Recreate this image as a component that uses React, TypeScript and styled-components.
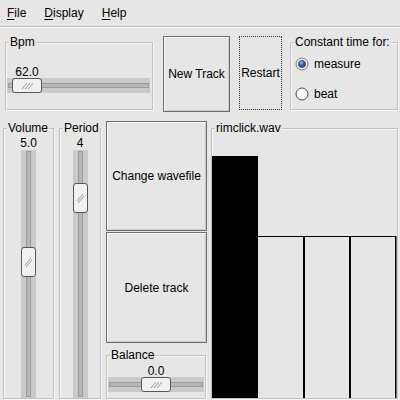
import React from "react";
import styled, { createGlobalStyle } from "styled-components";

const BG = "#e6e6e6";

const Global = createGlobalStyle`
  * { box-sizing: border-box; }
  html, body { margin: 0; padding: 0; background: ${BG}; }
  body {
    font-family: "Liberation Sans", Arial, sans-serif;
    font-size: 12px;
    color: #000;
  }
`;

const Window = styled.div`
  width: 400px;
  height: 400px;
  display: flex;
  flex-direction: column;
  background: ${BG};
  overflow: hidden;
`;

const MenuBar = styled.div`
  height: 27px;
  flex: none;
  display: flex;
  align-items: center;
  gap: 18px;
  padding: 0 0 1px 7px;
  border-bottom: 1px solid #bdbdbd;
  box-shadow: 0 1px 0 #fafafa;
`;

const MenuItem = styled.span`
  line-height: 14px;
`;

const Mnemonic = styled.span`
  text-decoration: underline;
  text-underline-offset: 2px;
`;

const TopRow = styled.div`
  flex: none;
  display: flex;
  align-items: flex-start;
  padding-top: 9px;
  height: 85px;
`;

const Frame = styled.div<{ $w: number; $h?: number; $ml: number; $mt: number; $grow?: boolean }>`
  position: relative;
  flex: ${(p) => (p.$grow ? "1" : "none")};
  width: ${(p) => p.$w}px;
  ${(p) => (p.$h ? `height: ${p.$h}px;` : "")}
  margin-left: ${(p) => p.$ml}px;
  margin-top: ${(p) => p.$mt}px;
  border: 1px solid #c3c3c3;
  box-shadow: inset 1px 1px 0 #f7f7f7, 1px 1px 0 #f7f7f7;
  display: flex;
  flex-direction: column;
`;

const FrameLabel = styled.span`
  position: absolute;
  top: -8px;
  left: 3px;
  padding: 0 1px;
  line-height: 14px;
  background: ${BG};
  white-space: nowrap;
`;

const PushButton = styled.button<{ $w: number; $h: number; $ml?: number; $mt?: number; $focus?: boolean }>`
  flex: none;
  width: ${(p) => p.$w}px;
  height: ${(p) => p.$h}px;
  margin-left: ${(p) => p.$ml ?? 0}px;
  margin-top: ${(p) => p.$mt ?? 0}px;
  padding: 0;
  background: ${BG};
  color: #000;
  font-family: "Liberation Sans", Arial, sans-serif;
  font-size: 12px;
  border: ${(p) => (p.$focus ? "1px dotted #333" : "1px solid #6d6d6d")};
  box-shadow: ${(p) => (p.$focus ? "none" : "inset 1px 1px 0 #fbfbfb, inset -1px -1px 0 #c9c9c9")};
  white-space: nowrap;
  cursor: default;
`;

/* ---------- scales ---------- */

const HScaleBox = styled.div<{ $pt: number }>`
  display: flex;
  flex-direction: column;
  padding: ${(p) => p.$pt}px 0 0 1px;
`;

const HValue = styled.div`
  width: 30px;
  height: 14px;
  line-height: 16px;
  text-align: center;
`;

const HTrough = styled.div<{ $w: number }>`
  position: relative;
  width: ${(p) => p.$w}px;
  height: 15px;
  background: #cacaca;
  display: flex;
  align-items: center;
  padding: 0 1px;
`;

const HGroove = styled.div`
  flex: 1;
  height: 5px;
  border: 1px solid #9b9b9b;
  background: #b7b7b7;
`;

const VScaleBox = styled.div`
  flex: 1;
  display: flex;
  flex-direction: column;
  align-items: center;
  padding-top: 7px;
`;

const VValue = styled.div`
  height: 14px;
  line-height: 15px;
  text-align: center;
`;

const VTrough = styled.div`
  position: relative;
  flex: 1;
  width: 15px;
  background: #cacaca;
  display: flex;
  justify-content: center;
  padding: 1px 0;
`;

const VGroove = styled.div`
  width: 5px;
  border: 1px solid #9b9b9b;
  background: #b7b7b7;
`;

const Handle = styled.div<{ $vertical?: boolean }>`
  position: absolute;
  width: ${(p) => (p.$vertical ? 15 : 30)}px;
  height: ${(p) => (p.$vertical ? 30 : 15)}px;
  background: #f1f1f1;
  border: 1px solid #575757;
  border-radius: 3px;
  display: flex;
  align-items: center;
  justify-content: center;
`;

const Hatch: React.FC<{ vertical?: boolean }> = ({ vertical }) =>
  vertical ? (
    <svg width="9" height="11" viewBox="0 0 9 11">
      <path d="M1 8 L7 1 M2 10 L8 3" stroke="#9a9a9a" strokeWidth="1" fill="none" />
    </svg>
  ) : (
    <svg width="12" height="8" viewBox="0 0 12 8">
      <path d="M1 7 L6 1 M4 7 L9 1 M7 7 L12 1" stroke="#9a9a9a" strokeWidth="1" fill="none" />
    </svg>
  );

const HScale: React.FC<{ width: number; pos: number; value: string; pt: number }> = ({ width, pos, value, pt }) => {
  const offset = Math.round(pos * (width - 30));
  return (
    <HScaleBox $pt={pt}>
      <HValue style={{ marginLeft: offset }}>{value}</HValue>
      <HTrough $w={width}>
        <HGroove />
        <Handle style={{ left: offset, top: 0 }}>
          <Hatch />
        </Handle>
      </HTrough>
    </HScaleBox>
  );
};

const VScale: React.FC<{ pos: number; value: string }> = ({ pos, value }) => (
  <VScaleBox>
    <VValue>{value}</VValue>
    <VTrough>
      <VGroove />
      <Handle $vertical style={{ top: `calc(${pos} * (100% - 30px))`, left: 0 }}>
        <Hatch vertical />
      </Handle>
    </VTrough>
  </VScaleBox>
);

/* ---------- radio ---------- */

const RadioList = styled.div`
  display: flex;
  flex-direction: column;
  gap: 14px;
  padding: 13px 0 0 4px;
`;

const RadioRow = styled.label`
  display: flex;
  align-items: center;
  gap: 5px;
  height: 16px;
  line-height: 14px;
`;

const RadioMark: React.FC<{ checked?: boolean }> = ({ checked }) => (
  <svg width="14" height="14" viewBox="0 0 14 14">
    <defs>
      <radialGradient id="dot" cx="0.4" cy="0.35" r="0.7">
        <stop offset="0" stopColor="#9fb4e0" />
        <stop offset="0.5" stopColor="#3b5ea8" />
        <stop offset="1" stopColor="#233f7a" />
      </radialGradient>
    </defs>
    <circle cx="7" cy="7" r="6" fill={checked ? "#e9e9e9" : "#ffffff"} stroke={checked ? "#7c7c7c" : "#4a4a4a"} strokeWidth="1" />
    {checked && <circle cx="7" cy="7" r="3.6" fill="url(#dot)" stroke="#2b3f6a" strokeWidth="0.6" />}
  </svg>
);

/* ---------- bottom ---------- */

const MainRow = styled.div`
  flex: 1;
  display: flex;
  align-items: stretch;
  margin-top: 9px;
  padding-bottom: 1px;
`;

const ButtonColumn = styled.div`
  flex: none;
  width: 101px;
  margin-left: 5px;
  display: flex;
  flex-direction: column;
`;

const GraphArea = styled.div`
  flex: 1;
  display: flex;
  padding-top: 27px;
`;

const BarGraph: React.FC = () => (
  <svg width="185" height="242" viewBox="0 0 185 242" preserveAspectRatio="none">
    <rect x="0" y="0" width="46" height="242" fill="#000" />
    <rect x="46" y="80" width="138" height="1" fill="#000" />
    <rect x="91" y="80" width="2" height="162" fill="#000" />
    <rect x="137" y="80" width="2" height="162" fill="#000" />
    <rect x="183" y="80" width="1.5" height="162" fill="#000" />
  </svg>
);

export default function App() {
  return (
    <>
      <Global />
      <Window>
        <MenuBar>
          <MenuItem>
            <Mnemonic>F</Mnemonic>ile
          </MenuItem>
          <MenuItem>
            <Mnemonic>D</Mnemonic>isplay
          </MenuItem>
          <MenuItem>
            <Mnemonic>H</Mnemonic>elp
          </MenuItem>
        </MenuBar>

        <TopRow>
          <Frame $w={148} $h={68} $ml={5} $mt={6}>
            <FrameLabel>Bpm</FrameLabel>
            <HScale width={143} pos={0.044} value="62.0" pt={21} />
          </Frame>
          <PushButton $w={67} $h={76} $ml={10}>New Track</PushButton>
          <PushButton $w={43} $h={74} $ml={9} $focus>
            Restart
          </PushButton>
          <Frame $w={108} $h={68} $ml={8} $mt={6}>
            <FrameLabel>Constant time for:</FrameLabel>
            <RadioList>
              <RadioRow>
                <RadioMark checked />
                measure
              </RadioRow>
              <RadioRow>
                <RadioMark />
                beat
              </RadioRow>
            </RadioList>
          </Frame>
        </TopRow>

        <MainRow>
          <Frame $w={51} $ml={3} $mt={7}>
            <FrameLabel>Volume</FrameLabel>
            <VScale pos={0.447} value="5.0" />
          </Frame>
          <Frame $w={42} $ml={5} $mt={7}>
            <FrameLabel>Period</FrameLabel>
            <VScale pos={0.152} value="4" />
          </Frame>
          <ButtonColumn>
            <PushButton $w={101} $h={110}>Change wavefile</PushButton>
            <PushButton $w={101} $h={111} $mt={1}>Delete track</PushButton>
            <Frame $w={100} $ml={0} $mt={12} $grow>
              <FrameLabel>Balance</FrameLabel>
              <HScale width={96} pos={0.5} value="0.0" pt={7} />
            </Frame>
          </ButtonColumn>
          <Frame $w={187} $ml={4} $mt={7}>
            <FrameLabel>rimclick.wav</FrameLabel>
            <GraphArea>
              <BarGraph />
            </GraphArea>
          </Frame>
        </MainRow>
      </Window>
    </>
  );
}
